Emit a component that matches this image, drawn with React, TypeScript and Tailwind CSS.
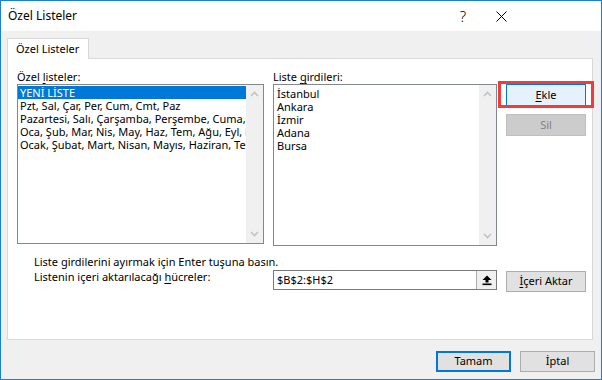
import { FC, ReactNode } from "react";

const font = { fontFamily: '"Noto Sans", "Liberation Sans", sans-serif' };

const Chevron: FC<{ down?: boolean }> = ({ down }) => (
    <svg width="9" height="6" viewBox="0 0 9 6" className="block">
        <polyline
            points={down ? "1,1 4.5,4.5 8,1" : "1,5 4.5,1.5 8,5"}
            fill="none"
            stroke="#c2c2c2"
            strokeWidth="1.6"
        />
    </svg>
);

const ScrollBar: FC = () => (
    <div className="w-[17px] h-full bg-[#f0f0f0] flex flex-col justify-between items-center py-[6px]">
        <Chevron />
        <Chevron down />
    </div>
);

// mnemonic letter
const U: FC<{ children: ReactNode }> = ({ children }) => (
    <span className="underline underline-offset-2 decoration-1">{children}</span>
);

const leftItems = [
    "Pzt, Sal, Çar, Per, Cum, Cmt, Paz",
    "Pazartesi, Salı, Çarşamba, Perşembe, Cuma, Cumartesi",
    "Oca, Şub, Mar, Nis, May, Haz, Tem, Ağu, Eyl, Eki",
    "Ocak, Şubat, Mart, Nisan, Mayıs, Haziran, Temmuz",
];

const cities = ["İstanbul", "Ankara", "İzmir", "Adana", "Bursa"];

const App: FC = () => {
    return (
        <div
            className="w-[602px] h-[380px] border border-[#1a7fd6] bg-[#f0f0f0] flex flex-col text-[11px] text-black"
            style={font}
        >
            {/* title bar */}
            <div className="h-[30px] bg-white flex items-center pl-[7px]">
                <span className="text-[12px]">Özel Listeler</span>
                <span className="ml-auto text-[15px] font-light mr-[30px] leading-none">?</span>
                <svg width="11" height="11" viewBox="0 0 11 11" className="mr-[94px]">
                    <path d="M0.5 0.5 L10.5 10.5 M10.5 0.5 L0.5 10.5" stroke="#000" strokeWidth="1" />
                </svg>
            </div>

            {/* body */}
            <div className="flex-1 flex flex-col pt-[7px]">
                <div className="ml-[6px] relative z-10 -mb-px w-[82px] h-[21px] bg-white border border-b-0 border-[#d9d9d9] flex items-center pl-[8px]">
                    Özel Listeler
                </div>
                <div className="ml-[6px] w-[586px] h-[282px] bg-white border border-[#d9d9d9] pt-[10px] pl-[9px]">
                    <div className="flex items-start">
                        <div className="w-[247px]">
                            <div className="h-[15px] leading-[15px]">
                                Özel <U>l</U>isteler:
                            </div>
                            <div className="h-[160px] border border-[#828790] flex">
                                <div className="flex-1 overflow-hidden pt-[1px]">
                                    <div className="h-[13px] leading-[13px] bg-[#0078d7] text-white pl-[2px] whitespace-nowrap">
                                        YENİ LİSTE
                                    </div>
                                    {leftItems.map((t) => (
                                        <div key={t} className="h-[13px] leading-[13px] pl-[2px] whitespace-nowrap">
                                            {t}
                                        </div>
                                    ))}
                                </div>
                                <ScrollBar />
                            </div>
                        </div>
                        <div className="w-[224px] ml-[9px]">
                            <div className="h-[15px] leading-[15px]">
                                Liste <U>g</U>irdileri:
                            </div>
                            <div className="h-[162px] border border-[#828790] flex">
                                <div className="flex-1 overflow-hidden pt-[2px] pl-[3px]">
                                    {cities.map((c) => (
                                        <div key={c} className="h-[13px] leading-[13px]">
                                            {c}
                                        </div>
                                    ))}
                                </div>
                                <ScrollBar />
                            </div>
                        </div>
                        <div className="w-[80px] ml-[9px] pt-[15px] flex flex-col">
                            <div className="relative">
                                <div className="absolute -left-[8px] -right-[8px] -top-[3px] -bottom-[2px] border-[3px] border-[#f03c3c]" />
                                <button className="w-full h-[22px] bg-[#e5f1fb] border border-[#0078d7] flex items-center justify-center">
                                    <U>E</U>kle
                                </button>
                            </div>
                            <button className="mt-[8px] w-full h-[22px] bg-[#cccccc] border border-[#bfbfbf] text-[#838383] flex items-center justify-center">
                                Sil
                            </button>
                        </div>
                    </div>

                    <div className="mt-[9px] pl-[17px] h-[14px] leading-[14px]">
                        Liste girdilerini ayırmak için Enter tuşuna basın.
                    </div>
                    <div className="mt-[1px] flex items-start">
                        <div className="w-[256px] pl-[17px] leading-[14px]">
                            Listenin içeri aktarılacağı <U>h</U>ücreler:
                        </div>
                        <div className="w-[224px] h-[20px] border border-[#7a7a7a] flex">
                            <div className="flex-1 pl-[3px] leading-[18px]">$B$2:$H$2</div>
                            <div className="w-[20px] h-full border-l border-[#adadad] bg-[#f0f0f0] flex items-center justify-center">
                                <svg width="10" height="11" viewBox="0 0 10 11">
                                    <path d="M5 0.5 L9.5 5 L6.5 5 L6.5 7.5 L3.5 7.5 L3.5 5 L0.5 5 Z" fill="#000" />
                                    <rect x="0.5" y="8.5" width="9" height="1.6" fill="#000" />
                                </svg>
                            </div>
                        </div>
                        <button className="ml-[9px] mt-[1px] w-[80px] h-[21px] bg-[#e1e1e1] border border-[#adadad] flex items-center justify-center">
                            <U>İ</U>çeri Aktar
                        </button>
                    </div>
                </div>

                <div className="mt-[11px] flex justify-end gap-[9px] pr-[6px]">
                    <button className="w-[75px] h-[21px] bg-[#e1e1e1] border-2 border-[#0078d7] flex items-center justify-center">
                        Tamam
                    </button>
                    <button className="w-[75px] h-[21px] bg-[#e1e1e1] border border-[#adadad] flex items-center justify-center">
                        İptal
                    </button>
                </div>
            </div>
        </div>
    );
};

export default App;
